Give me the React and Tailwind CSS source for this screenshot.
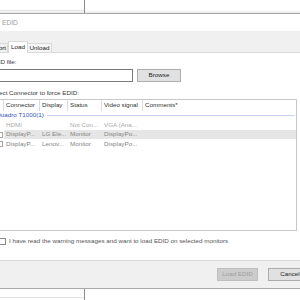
import React from "react";

const F = "font-['Liberation_Sans',Arial,sans-serif]";

function Th({ w, children, last }) {
  return (
    <div
      className={`h-full flex items-center pl-[2px] text-[#333] ${last ? "flex-1" : "border-r border-[#dcdcdc]"}`}
      style={w ? { width: w } : undefined}
    >
      {children}
    </div>
  );
}

function Row({ h, cells, color, hl, box }) {
  const widths = [36, 28, 34, 41];
  return (
    <div className={`flex ${h}`}>
      <div className="w-[14px] h-full flex items-center justify-end pr-[1px]">
        {box && <div className="w-[7px] h-[6px] border border-[#a5a5a5] bg-white" />}
      </div>
      <div className={`flex flex-1 h-full ${hl ? "bg-[#e6e6e6]" : ""}`} style={{ color }}>
        {cells.map((c, i) => (
          <div key={i} className="h-full flex items-center pl-[2px] whitespace-nowrap overflow-hidden" style={{ width: widths[i] }}>
            {c}
          </div>
        ))}
        <div className="flex-1" />
      </div>
    </div>
  );
}

export default function App() {
  return (
    <div className={`w-[300px] h-[300px] overflow-hidden bg-white ${F} text-[6.25px] leading-none`}>
      {/* background window top */}
      <div className="h-[13px] flex">
        <div className="w-[85px] h-full border-r border-[#8c8c8c]">
          <div className="h-[11px] border-b border-[#e4e4e4]" />
        </div>
      </div>
      {/* dialog */}
      <div className="w-[340px] ml-[-20px] border-t border-b border-[#a8a8a8] shadow-[0_-1px_2px_rgba(0,0,0,0.12)] flex flex-col">
        {/* title bar */}
        <div className="h-[17px] bg-white flex items-center pl-[22px] pt-[2px] text-[#9a9a9a] text-[6.6px]">EDID</div>
        {/* tab strip */}
        <div className="h-[22px] bg-[#f0f0f0] flex items-end border-b border-[#d9d9d9]">
          <div className="ml-[3px] w-[25px] h-[9px] border border-b-0 border-[#d9d9d9] bg-[#f0f0f0] flex items-center pl-[4px] text-[#222]">
            Export
          </div>
          <div className="w-[20px] h-[12px] border border-b-0 border-[#d9d9d9] bg-white flex items-center justify-center text-[#222] mb-[-1px] relative">
            Load
          </div>
          <div className="w-[24px] h-[9px] border border-b-0 border-l-0 border-[#d9d9d9] bg-[#f6f6f6] flex items-center justify-center text-[#222]">
            Unload
          </div>
        </div>
        {/* tab page */}
        <div className="bg-white h-[207px] pl-[10px] pr-[23px] flex flex-col text-[#3a3a3a]">
          <div className="h-[10px] mt-[4px] flex items-center">EDID file:</div>
          <div className="mt-[2px] flex h-[13px]">
            <div className="w-[143px] h-full border border-[#7a7a7a] bg-white" />
            <div className="ml-[4px] w-[44px] h-full border border-[#adadad] bg-[#e1e1e1] flex items-center justify-center text-[#222]">
              Browse
            </div>
          </div>
          <div className="mt-[6px] h-[10px] flex items-center">Select Connector to force EDID:</div>
          {/* table */}
          <div className="mt-[1px] h-[132px] border-t border-r border-b border-[#c8c8c8] flex flex-col">
            <div className="h-[11px] flex">
              <Th w={14}></Th>
              <Th w={36}>Connector</Th>
              <Th w={28}>Display</Th>
              <Th w={34}>Status</Th>
              <Th w={41}>Video signal</Th>
              <Th last>Comments*</Th>
            </div>
            <div className="h-[9px] flex items-center pl-[6px]">
              <span className="text-[#3457b0] whitespace-nowrap">Quadro T1000(1)</span>
              <div className="flex-1 ml-[3px] mr-[1px] border-t border-[#c9d1f1]" />
            </div>
            <Row h="h-[10px]" color="#a9a9a9" cells={["HDMI", "", "Not Con...", "VGA (Ana..."]} />
            <Row h="h-[9px]" color="#858585" hl box cells={["DisplayP...", "LG Ele...", "Monitor", "DisplayPo..."]} />
            <Row h="h-[10px]" color="#858585" box cells={["DisplayP...", "Lenov...", "Monitor", "DisplayPo..."]} />
          </div>
          <div className="mt-[6px] h-[8px] flex items-center">
            <div className="ml-[9px] w-[7px] h-[7px] border border-[#8a8a8a] bg-white" />
            <span className="ml-[3px] text-[#555] whitespace-nowrap">
              I have read the warning messages and want to load EDID on selected monitors
            </span>
          </div>
        </div>
        {/* footer */}
        <div className="h-[28px] bg-[#f0f0f0] border-t border-[#dadada] flex items-center pl-[237px]">
          <div className="w-[41px] h-[13px] border border-[#bfbfbf] bg-[#cccccc] flex items-center justify-center text-[#a0a0a0]">
            Load EDID
          </div>
          <div className="ml-[10px] w-[44px] h-[13px] border border-[#adadad] bg-[#e1e1e1] flex items-center justify-center text-[#222]">
            Cancel
          </div>
        </div>
      </div>
      {/* background window bottom */}
      <div className="h-[20px] flex">
        <div className="w-[85px] h-full border-r border-[#8c8c8c]">
          <div className="h-[9px] border-b border-[#e4e4e4]" />
        </div>
      </div>
    </div>
  );
}
